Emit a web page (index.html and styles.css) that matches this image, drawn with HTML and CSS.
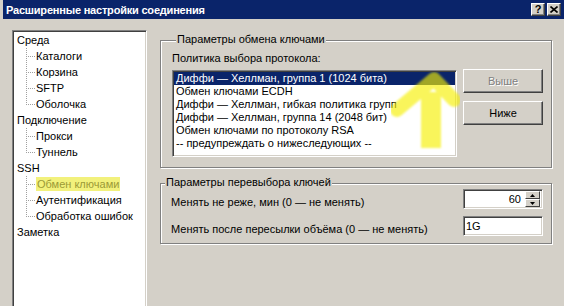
FILE: index.html
```html
<!DOCTYPE html>
<html lang="ru">
<head>
  <meta charset="UTF-8">
  <title>Расширенные настройки соединения</title>
  <link rel="stylesheet" href="styles.css">
</head>
<body>
  <div class="window">
    <div class="titlebar">
      <span class="title">Расширенные настройки соединения</span>
      <span class="caption-btns">
        <span class="cbtn">?</span>
        <span class="cbtn">
          <svg width="8" height="7" viewBox="0 0 8 7"><path d="M0.5 0.5 L7.5 6.5 M7.5 0.5 L0.5 6.5" stroke="#000" stroke-width="1.6"/></svg>
        </span>
      </span>
    </div>

    <div class="body">
      <ul class="tree">
        <li>Среда</li>
        <li class="child">Каталоги</li>
        <li class="child">Корзина</li>
        <li class="child">SFTP</li>
        <li class="child last">Оболочка</li>
        <li>Подключение</li>
        <li class="child">Прокси</li>
        <li class="child last">Туннель</li>
        <li>SSH</li>
        <li class="child"><span class="marked">Обмен ключами</span></li>
        <li class="child">Аутентификация</li>
        <li class="child last">Обработка ошибок</li>
        <li>Заметка</li>
      </ul>

      <div class="pane">
        <div class="group kex">
          <div class="group-title">Параметры обмена ключами</div>
          <div class="label">Политика выбора протокола:</div>
          <div class="kex-row">
            <ul class="listbox">
              <li class="selected">Диффи — Хеллман, группа 1 (1024 бита)</li>
              <li>Обмен ключами ECDH</li>
              <li>Диффи — Хеллман, гибкая политика групп</li>
              <li>Диффи — Хеллман, группа 14 (2048 бит)</li>
              <li>Обмен ключами по протоколу RSA</li>
              <li>-- предупреждать о нижеследующих --</li>
            </ul>
            <div class="btns">
              <button class="btn" disabled>Выше</button>
              <button class="btn">Ниже</button>
            </div>
            <!-- highlighter arrow drawn over the list -->
            <svg class="marker" width="72" height="84" viewBox="0 0 72 84">
              <defs>
                <filter id="soft"><feGaussianBlur stdDeviation="0.8"/></filter>
              </defs>
              <g opacity="0.64" filter="url(#soft)" fill="none" stroke="#f6f000">
                <path d="M41 20 L41 76" stroke-width="20"/>
                <path d="M7 38 L44 7 L64 28" stroke-width="14" stroke-linecap="round" stroke-linejoin="round"/>
              </g>
            </svg>
          </div>
        </div>

        <div class="group rekey">
          <div class="group-title">Параметры перевыбора ключей</div>
          <div class="row">
            <span class="row-label">Менять не реже, мин (0 — не менять)</span>
            <div class="field spin">
              <span class="value">60</span>
              <span class="spin-btns">
                <span class="sbtn"><svg width="5" height="3" viewBox="0 0 5 3"><polygon points="2.5,0 5,3 0,3" fill="#000"/></svg></span>
                <span class="sbtn"><svg width="5" height="3" viewBox="0 0 5 3"><polygon points="0,0 5,0 2.5,3" fill="#000"/></svg></span>
              </span>
            </div>
          </div>
          <div class="row">
            <span class="row-label">Менять после пересылки объёма (0 — не менять)</span>
            <div class="field text">1G</div>
          </div>
        </div>
      </div>
    </div>
  </div>
</body>
</html>
```

FILE: styles.css
```css
body { margin: 0; height: 306px; overflow: hidden; background: #d4d0c8; color: #000; font: 11px "Liberation Sans", Arial, sans-serif; }
ul { list-style: none; margin: 0; padding: 0; }

.window { padding-left: 3px; }

.titlebar { display: flex; justify-content: space-between; height: 19px; background: #0a246a; color: #fff; }
.title { font-weight: bold; padding: 4px 0 0 3px; line-height: 13px; letter-spacing: -0.2px; }
.caption-btns { display: flex; gap: 2px; padding: 3px 3px 0 0; }
.cbtn { display: flex; align-items: center; justify-content: center; box-sizing: border-box; width: 14px; height: 13px; background: #d4d0c8; color: #000; font-weight: bold; font-size: 11px; line-height: 11px; border: 1px solid; border-color: #fff #404040 #404040 #fff; box-shadow: inset -1px -1px 0 #808080; }

.body { display: flex; padding: 11px 0 0 9px; }

.tree { box-sizing: border-box; width: 135px; height: 290px; padding: 1px 0 0 4px; background: #fff; border: 1px solid; border-color: #808080 #fff #fff #808080; box-shadow: inset 1px 1px 0 #404040, inset -1px -1px 0 #d4d0c8; }
.tree li { height: 16px; line-height: 16px; white-space: nowrap; }
.tree .child {
  padding-left: 19px;
  background-image: repeating-linear-gradient(to bottom, #a0a0a0 0 1px, transparent 1px 2px), repeating-linear-gradient(to right, #a0a0a0 0 1px, transparent 1px 2px);
  background-size: 1px 16px, 9px 1px;
  background-position: 9px 0, 9px 8px;
  background-repeat: no-repeat;
}
.tree .child.last { background-size: 1px 9px, 9px 1px; }
.marked { background: #f2f17c; color: #9c9a36; padding: 1px 1px; }

.pane { margin-left: 13px; width: 392px; }

.group { border: 1px solid #808080; box-shadow: inset 1px 1px 0 #fff, 1px 1px 0 #fff; }
.group-title { width: fit-content; margin: -8px 0 0 5px; padding: 0 1px; line-height: 13px; background: #d4d0c8; }

.kex { margin-top: 10px; padding: 0 8px 10px 10px; }
.label { margin-top: 6px; line-height: 13px; padding-left: 1px; }
.kex-row { position: relative; display: flex; gap: 6px; margin-top: 5px; padding-left: 1px; }

.listbox { box-sizing: border-box; width: 285px; height: 87px; padding: 1px; background: #fff; border: 1px solid; border-color: #808080 #fff #fff #808080; box-shadow: inset 1px 1px 0 #404040, inset -1px -1px 0 #d4d0c8; }
.listbox li { height: 13px; line-height: 13px; padding-left: 2px; white-space: nowrap; overflow: hidden; }
.listbox .selected { background: #0a246a; color: #fff; }

.btns { display: flex; flex-direction: column; gap: 8px; margin-top: -1px; }
.btn { box-sizing: border-box; width: 80px; height: 24px; padding: 0; background: #d4d0c8; color: #000; font: 11px "Liberation Sans", Arial, sans-serif; font-weight: normal; border: 1px solid; border-color: #fff #404040 #404040 #fff; box-shadow: inset -1px -1px 0 #808080; }
.btn:disabled { color: #808080; text-shadow: 1px 1px 0 #fff; }

.marker { position: absolute; left: 219px; top: 2px; pointer-events: none; }

.rekey { margin-top: 15px; padding: 0 8px 7px 0; }
.rekey .group-title { margin-left: 4px; }
.row { display: flex; justify-content: space-between; align-items: center; padding-left: 10px; }
.row + .row { margin-top: 7px; }
.row-label { padding-top: 7px; line-height: 13px; }

.field { box-sizing: border-box; width: 80px; height: 20px; background: #fff; border: 1px solid; border-color: #808080 #fff #fff #808080; box-shadow: inset 1px 1px 0 #404040, inset -1px -1px 0 #d4d0c8; }
.spin { display: flex; align-items: center; justify-content: flex-end; padding-right: 2px; }
.spin .value { padding-right: 4px; }
.spin-btns { display: flex; flex-direction: column; }
.sbtn { display: flex; align-items: center; justify-content: center; box-sizing: border-box; width: 15px; height: 8px; background: #d4d0c8; border: 1px solid; border-color: #fff #404040 #404040 #fff; }
.text { padding: 2px 0 0 2px; line-height: 14px; }
```
